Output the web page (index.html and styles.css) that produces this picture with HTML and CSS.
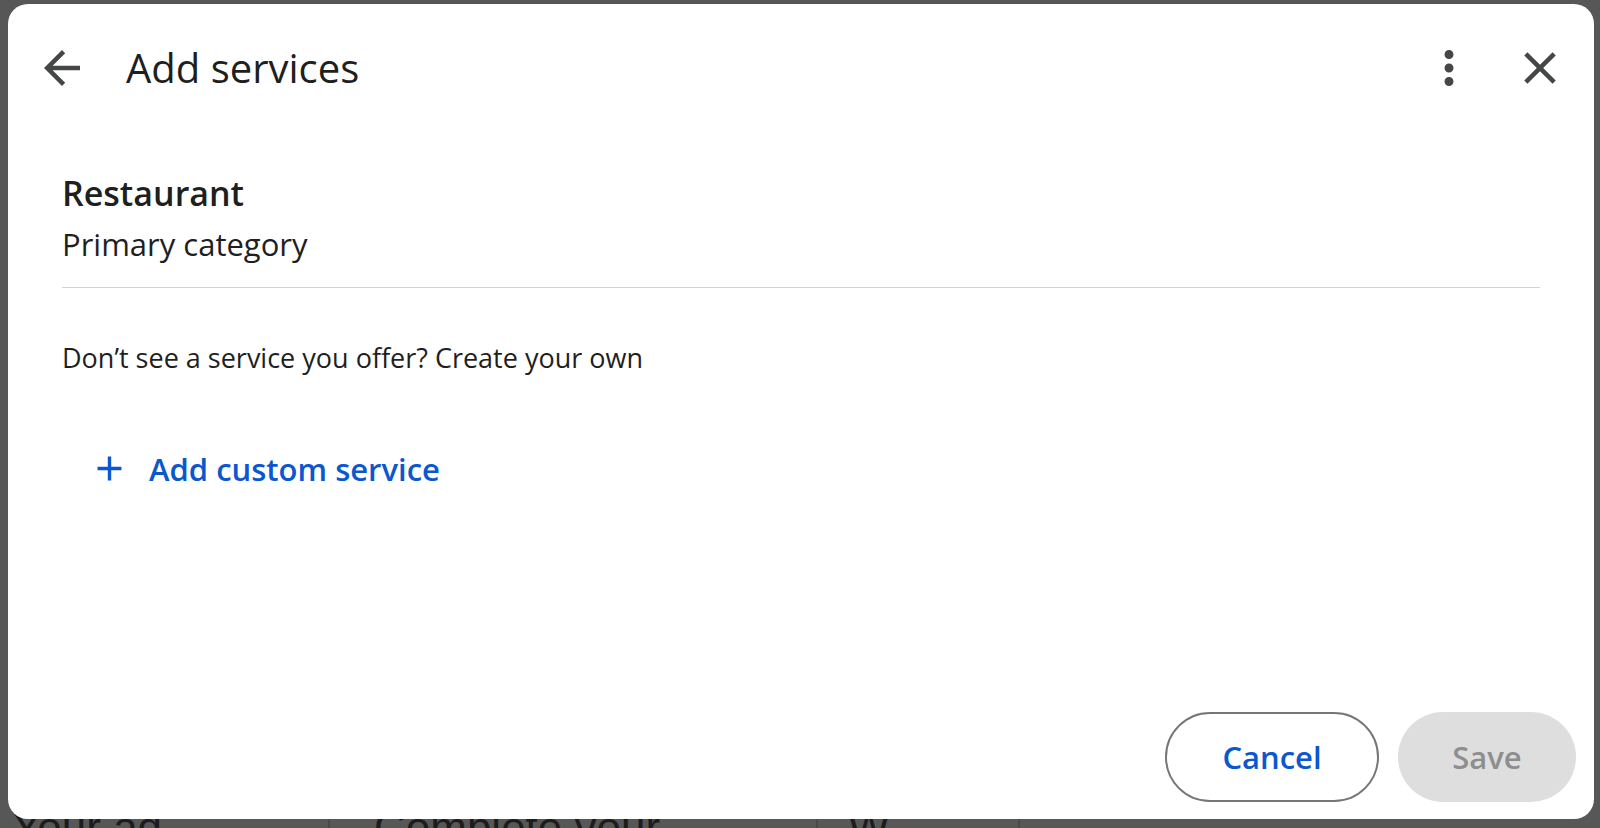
FILE: index.html
```html
<html lang="en">
<head>
    <meta charset="UTF-8">
    <meta name="viewport" content="width=device-width, initial-scale=1.0">
    <title>Add services</title>
    <link rel="stylesheet" href="styles.css">
</head>
<body>
    <div id="backdrop">
        <span class="bg-text first">Your ad</span>
        <span class="bg-rule"></span>
        <span class="bg-text second">Complete your</span>
        <span class="bg-rule"></span>
        <span class="bg-text third">W</span>
        <span class="bg-rule"></span>
    </div>

    <div id="dialog">
        <div id="dialog-header">
            <button class="icon-button" title="Back">
                <svg viewBox="0 0 24 24"><path d="M20 11H7.83l5.59-5.59L12 4l-8 8 8 8 1.41-1.41L7.83 13H20v-2z"/></svg>
            </button>
            <h1 id="dialog-title">Add services</h1>
            <button class="icon-button" title="More">
                <svg viewBox="0 0 24 24"><path d="M12 8c1.1 0 2-.9 2-2s-.9-2-2-2-2 .9-2 2 .9 2 2 2zm0 2c-1.1 0-2 .9-2 2s.9 2 2 2 2-.9 2-2-.9-2-2-2zm0 6c-1.1 0-2 .9-2 2s.9 2 2 2 2-.9 2-2-.9-2-2-2z"/></svg>
            </button>
            <button class="icon-button" title="Close">
                <svg viewBox="0 0 24 24"><path d="M19 6.41L17.59 5 12 10.59 6.41 5 5 6.41 10.59 12 5 17.59 6.41 19 12 13.41 17.59 19 19 17.59 13.41 12z"/></svg>
            </button>
        </div>

        <div id="dialog-body">
            <div id="category">
                <h2 class="category-name">Restaurant</h2>
                <p class="category-type">Primary category</p>
            </div>

            <p class="hint">Don’t see a service you offer? Create your own</p>

            <button id="add-custom">
                <svg viewBox="0 0 24 24"><path d="M19 13h-6v6h-2v-6H5v-2h6V5h2v6h6v2z"/></svg>
                <span>Add custom service</span>
            </button>
        </div>

        <div id="dialog-footer">
            <button id="cancel-button">Cancel</button>
            <button id="save-button" disabled>Save</button>
        </div>
    </div>
</body>
</html>
```

FILE: styles.css
```css
body {
    margin: 0;
    width: 1600px;
    height: 828px;
    overflow: hidden;
    background: #575757;
    font-family: "Open Sans", Arial, sans-serif;
    color: #1f1f1f;
    position: relative;
}

/* dimmed page behind the dialog */
#backdrop {
    position: absolute;
    left: 0;
    top: 806px;
    width: 100%;
    display: flex;
    align-items: flex-start;
    color: #1c1c1c;
}

.bg-text {
    font-family: "Liberation Sans", Arial, sans-serif;
    font-size: 44px;
    line-height: 44px;
}

.bg-text.first {
    margin-left: 12px;
    width: 316px;
}

.bg-text.second {
    margin-left: 44px;
    width: 442px;
}

.bg-text.third {
    margin-left: 30px;
    width: 170px;
}

.bg-rule {
    width: 2px;
    height: 40px;
    background: #4a4a4a;
}

#dialog {
    position: relative;
    z-index: 1;
    margin: 4px 6px 0 8px;
    height: 815px;
    background: #fff;
    border-radius: 20px;
    display: flex;
    flex-direction: column;
}

#dialog-header {
    height: 128px;
    display: flex;
    align-items: center;
    padding: 0 27px;
}

.icon-button {
    width: 54px;
    height: 54px;
    padding: 0;
    border: none;
    background: none;
    cursor: pointer;
}

.icon-button svg {
    width: 54px;
    height: 54px;
    fill: #444746;
    display: block;
}

#dialog-title {
    flex: 1;
    margin: 0 0 0 37px;
    font-size: 40px;
    line-height: 48px;
    font-weight: 400;
}

#dialog-header .icon-button + .icon-button {
    margin-left: 37px;
}

#dialog-body {
    padding: 0 54px;
}

#category {
    padding: 39px 0 24px;
    border-bottom: 1px solid #d3d3d3;
}

.category-name {
    margin: 0;
    font-size: 34px;
    line-height: 44px;
    font-weight: 600;
}

.category-type {
    margin: 10px 0 0;
    font-size: 31px;
    line-height: 38px;
}

.hint {
    margin: 52px 0 0;
    font-size: 27px;
    line-height: 36px;
}

#add-custom {
    margin: 72px 0 0 27px;
    padding: 0;
    border: none;
    background: none;
    display: flex;
    align-items: center;
    color: #0b57d0;
    font-family: inherit;
    font-size: 31px;
    line-height: 40px;
    font-weight: 600;
    cursor: pointer;
}

#add-custom svg {
    width: 41px;
    height: 41px;
    fill: #0b57d0;
    margin-right: 19px;
}

#dialog-footer {
    margin-top: auto;
    padding: 0 18px 17px 0;
    display: flex;
    justify-content: flex-end;
    gap: 19px;
}

#dialog-footer button {
    height: 90px;
    border-radius: 45px;
    font-family: inherit;
    font-size: 31px;
    font-weight: 600;
    cursor: pointer;
}

#cancel-button {
    width: 214px;
    background: #fff;
    color: #0b57d0;
    border: 2px solid #747775;
}

#save-button {
    width: 178px;
    background: #dedede;
    color: #8e8e8e;
    border: none;
}
```
